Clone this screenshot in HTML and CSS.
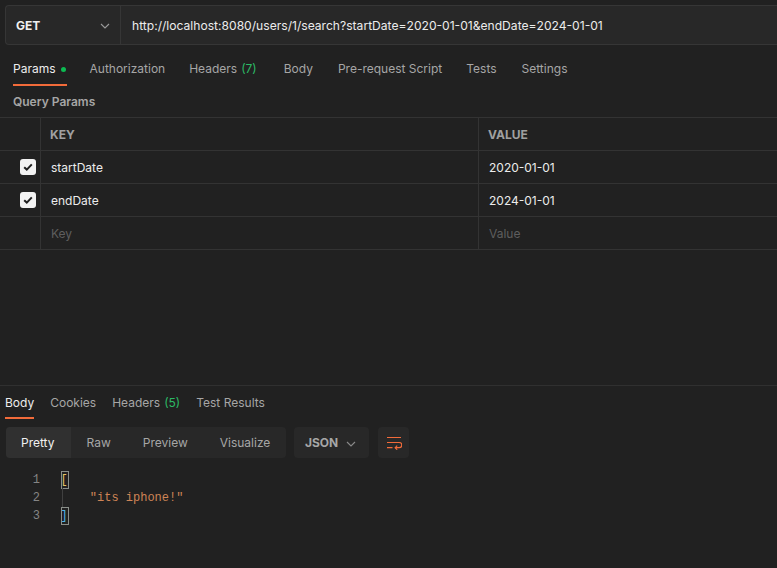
FILE: index.html
```html
<!DOCTYPE html>
<html>
<head>
<meta charset="utf-8">
<link rel="stylesheet" href="styles.css">
</head>
<body>
<div class="app">
  <div class="urlbar">
    <div class="method">
      <span class="method-name">GET</span>
      <svg class="chev" width="10" height="6" viewBox="0 0 10 6"><path d="M1 1l4 4 4-4" fill="none" stroke="#9a9a9a" stroke-width="1.1"/></svg>
    </div>
    <div class="url">http://localhost:8080/users/1/search?startDate=2020-01-01&amp;endDate=2024-01-01</div>
  </div>

  <div class="tabs req-tabs">
    <div class="tab active">Params<span class="dot"></span></div>
    <div class="tab">Authorization</div>
    <div class="tab">Headers <span class="count">(7)</span></div>
    <div class="tab">Body</div>
    <div class="tab">Pre-request Script</div>
    <div class="tab">Tests</div>
    <div class="tab">Settings</div>
  </div>

  <div class="section-title">Query Params</div>

  <div class="table">
    <div class="row head">
      <div class="cell chk"></div>
      <div class="cell key">KEY</div>
      <div class="cell val">VALUE</div>
    </div>
    <div class="row">
      <div class="cell chk"><span class="box"><svg width="10" height="8" viewBox="0 0 10 8"><path d="M1.2 4.2l2.6 2.4L8.8 1.4" fill="none" stroke="#1f1f1f" stroke-width="2"/></svg></span></div>
      <div class="cell key">startDate</div>
      <div class="cell val">2020-01-01</div>
    </div>
    <div class="row">
      <div class="cell chk"><span class="box"><svg width="10" height="8" viewBox="0 0 10 8"><path d="M1.2 4.2l2.6 2.4L8.8 1.4" fill="none" stroke="#1f1f1f" stroke-width="2"/></svg></span></div>
      <div class="cell key">endDate</div>
      <div class="cell val">2024-01-01</div>
    </div>
    <div class="row">
      <div class="cell chk"></div>
      <div class="cell key ph">Key</div>
      <div class="cell val ph">Value</div>
    </div>
  </div>

  <div class="spacer"></div>

  <div class="response">
    <div class="tabs res-tabs">
      <div class="tab active">Body</div>
      <div class="tab">Cookies</div>
      <div class="tab">Headers <span class="count">(5)</span></div>
      <div class="tab">Test Results</div>
    </div>
    <div class="toolbar">
      <div class="seg">
        <div class="seg-item on">Pretty</div>
        <div class="seg-item">Raw</div>
        <div class="seg-item">Preview</div>
        <div class="seg-item">Visualize</div>
      </div>
      <div class="lang">
        <span>JSON</span>
        <svg width="10" height="6" viewBox="0 0 10 6"><path d="M1 1l4 4 4-4" fill="none" stroke="#8a8a8a" stroke-width="1.1"/></svg>
      </div>
      <div class="wrap">
        <svg width="16" height="14" viewBox="0 0 16 14"><path d="M1 1.5h14M1 6.5h12.2a2.6 2.6 0 0 1 0 5.2H9.5M1 11.7h5.5" fill="none" stroke="#f26b3a" stroke-width="1.2"/><path d="M11.2 9.7l-2 2 2 2" fill="none" stroke="#f26b3a" stroke-width="1.2"/></svg>
      </div>
    </div>
    <div class="code">
      <div class="line"><span class="ln">1</span><span class="src"><span class="br br-open">[</span></span></div>
      <div class="line"><span class="ln">2</span><span class="src"><span class="guide"></span>    <span class="str">"its iphone!"</span></span></div>
      <div class="line"><span class="ln">3</span><span class="src"><span class="br br-close">]</span></span></div>
    </div>
  </div>
</div>
</body>
</html>
```

FILE: styles.css
```css
html, body {
  margin: 0;
  padding: 0;
  background: #212121;
}
body {
  font-family: Inter, "Noto Sans", sans-serif;
  font-size: 12px;
  color: #e8e8e8;
  width: 777px;
  height: 568px;
  overflow: hidden;
}
.app {
  display: flex;
  flex-direction: column;
  height: 568px;
}
.urlbar {
  display: flex;
  margin: 5px 0 0 5px;
  height: 38px;
  background: #282828;
  border: 1px solid #363636;
  border-right: none;
  border-radius: 4px 0 0 4px;
}
.method {
  width: 115px;
  display: flex;
  align-items: center;
  justify-content: space-between;
  padding: 0 10px 0 10px;
  box-sizing: border-box;
  border-right: 1px solid #363636;
}
.method-name {
  font-weight: 700;
  font-size: 12px;
  color: #f0f0f0;
}
.chev { margin-top: 1px; }
.url {
  display: flex;
  align-items: center;
  padding-left: 11px;
  font-size: 12.1px;
  color: #ececec;
  white-space: nowrap;
}
.tabs {
  display: flex;
}
.req-tabs {
  margin-top: 11px;
  padding-left: 13px;
  height: 30px;
}
.tab {
  color: #a6a6a6;
  font-size: 12px;
  line-height: 26px;
  position: relative;
  display: flex;
  align-items: flex-start;
}
.req-tabs .tab { margin-right: 23px; }
.req-tabs .tab:nth-child(1) { margin-right: 23px; }
.req-tabs .tab:nth-child(2) { margin-right: 24px; }
.req-tabs .tab:nth-child(3) { margin-right: 27px; }
.req-tabs .tab:nth-child(4) { margin-right: 25px; }
.req-tabs .tab:nth-child(5) { margin-right: 24px; }
.req-tabs .tab:nth-child(6) { margin-right: 25px; }
.tab.active { color: #ededed; }
.tab.active::after {
  content: "";
  position: absolute;
  left: 0;
  right: 0;
  bottom: 0;
  height: 2px;
  background: #f26b3a;
}
.dot {
  width: 5px;
  height: 5px;
  border-radius: 50%;
  background: #0cbb52;
  margin-left: 5px;
  margin-top: 11px;
  margin-right: 1px;
}
.count { color: #2cba65; margin-left: 4px; }
.section-title {
  padding: 6px 0 0 13px;
  height: 31px;
  box-sizing: border-box;
  font-size: 12px;
  font-weight: 600;
  color: #a6a6a6;
  line-height: 20px;
}
.table {
  border-top: 1px solid #333333;
}
.row {
  display: flex;
  height: 33px;
  border-bottom: 1px solid #333333;
  box-sizing: border-box;
}
.cell {
  display: flex;
  align-items: center;
  box-sizing: border-box;
}
.cell.chk {
  width: 41px;
  border-right: 1px solid #333333;
  justify-content: flex-end;
  padding-right: 4px;
}
.cell.key {
  width: 438px;
  border-right: 1px solid #333333;
  padding-left: 10px;
  color: #ececec;
}
.cell.val {
  flex: 1;
  padding-left: 10px;
  color: #ececec;
}
.head .cell {
  font-size: 12px;
  font-weight: 700;
  color: #a0a0a0;
  padding-left: 9px;
}
.head .cell.chk { padding-left: 0; }
.cell.ph { color: #5e5e5e; }
.box {
  width: 16px;
  height: 16px;
  background: #f2f2f2;
  border-radius: 3px;
  display: flex;
  align-items: center;
  justify-content: center;
}
.spacer { flex: 1; }
.response {
  height: 183px;
  border-top: 1px solid #303030;
  box-sizing: border-box;
}
.res-tabs {
  padding-left: 5px;
  margin-top: 4px;
  height: 29px;
}
.res-tabs .tab { margin-right: 16px; line-height: 26px; }
.toolbar {
  display: flex;
  margin: 8px 0 0 6px;
  gap: 8px;
  height: 31px;
}
.seg {
  display: flex;
  width: 280px;
  background: #282828;
  border-radius: 4px;
  overflow: hidden;
}
.seg-item {
  display: flex;
  align-items: center;
  color: #a6a6a6;
  padding: 0 16px;
}
.seg-item.on {
  background: #303030;
  color: #f0f0f0;
  padding: 0 16px 0 15px;
}
.lang {
  width: 75px;
  box-sizing: border-box;
  background: #282828;
  border-radius: 4px;
  display: flex;
  align-items: center;
  justify-content: space-between;
  padding: 0 13px 0 11px;
  font-size: 12px;
  font-weight: 700;
  color: #a6a6a6;
}
.lang svg { margin-top: 2px; }
.wrap {
  width: 31px;
  background: #282828;
  border-radius: 4px;
  display: flex;
  align-items: center;
  justify-content: center;
  margin-left: 1px;
}
.code {
  margin-top: 13px;
  font-family: "Liberation Mono", "DejaVu Sans Mono", monospace;
  font-size: 12px;
}
.line {
  display: flex;
  height: 18px;
  line-height: 18px;
}
.ln {
  text-align: right;
  color: #858585;
  padding-right: 21px;
  box-sizing: border-box;
  width: 61px;
}
.src {
  position: relative;
  white-space: pre;
  color: #d4d4d4;
}
.str { color: #ce8456; }
.br {
  display: inline-block;
  width: 8px;
  height: 18px;
  line-height: 16px;
  border: 1px solid #8a8f8a;
  box-sizing: border-box;
  font-size: 12px;
  text-align: center;
  overflow: hidden;
  text-indent: -2px;
}
.br-open { color: #e6c266; }
.br-close { color: #4fb3e8; }
.guide {
  position: absolute;
  left: 1px;
  top: -1px;
  bottom: -1px;
  width: 1px;
  background: #404040;
}
```
